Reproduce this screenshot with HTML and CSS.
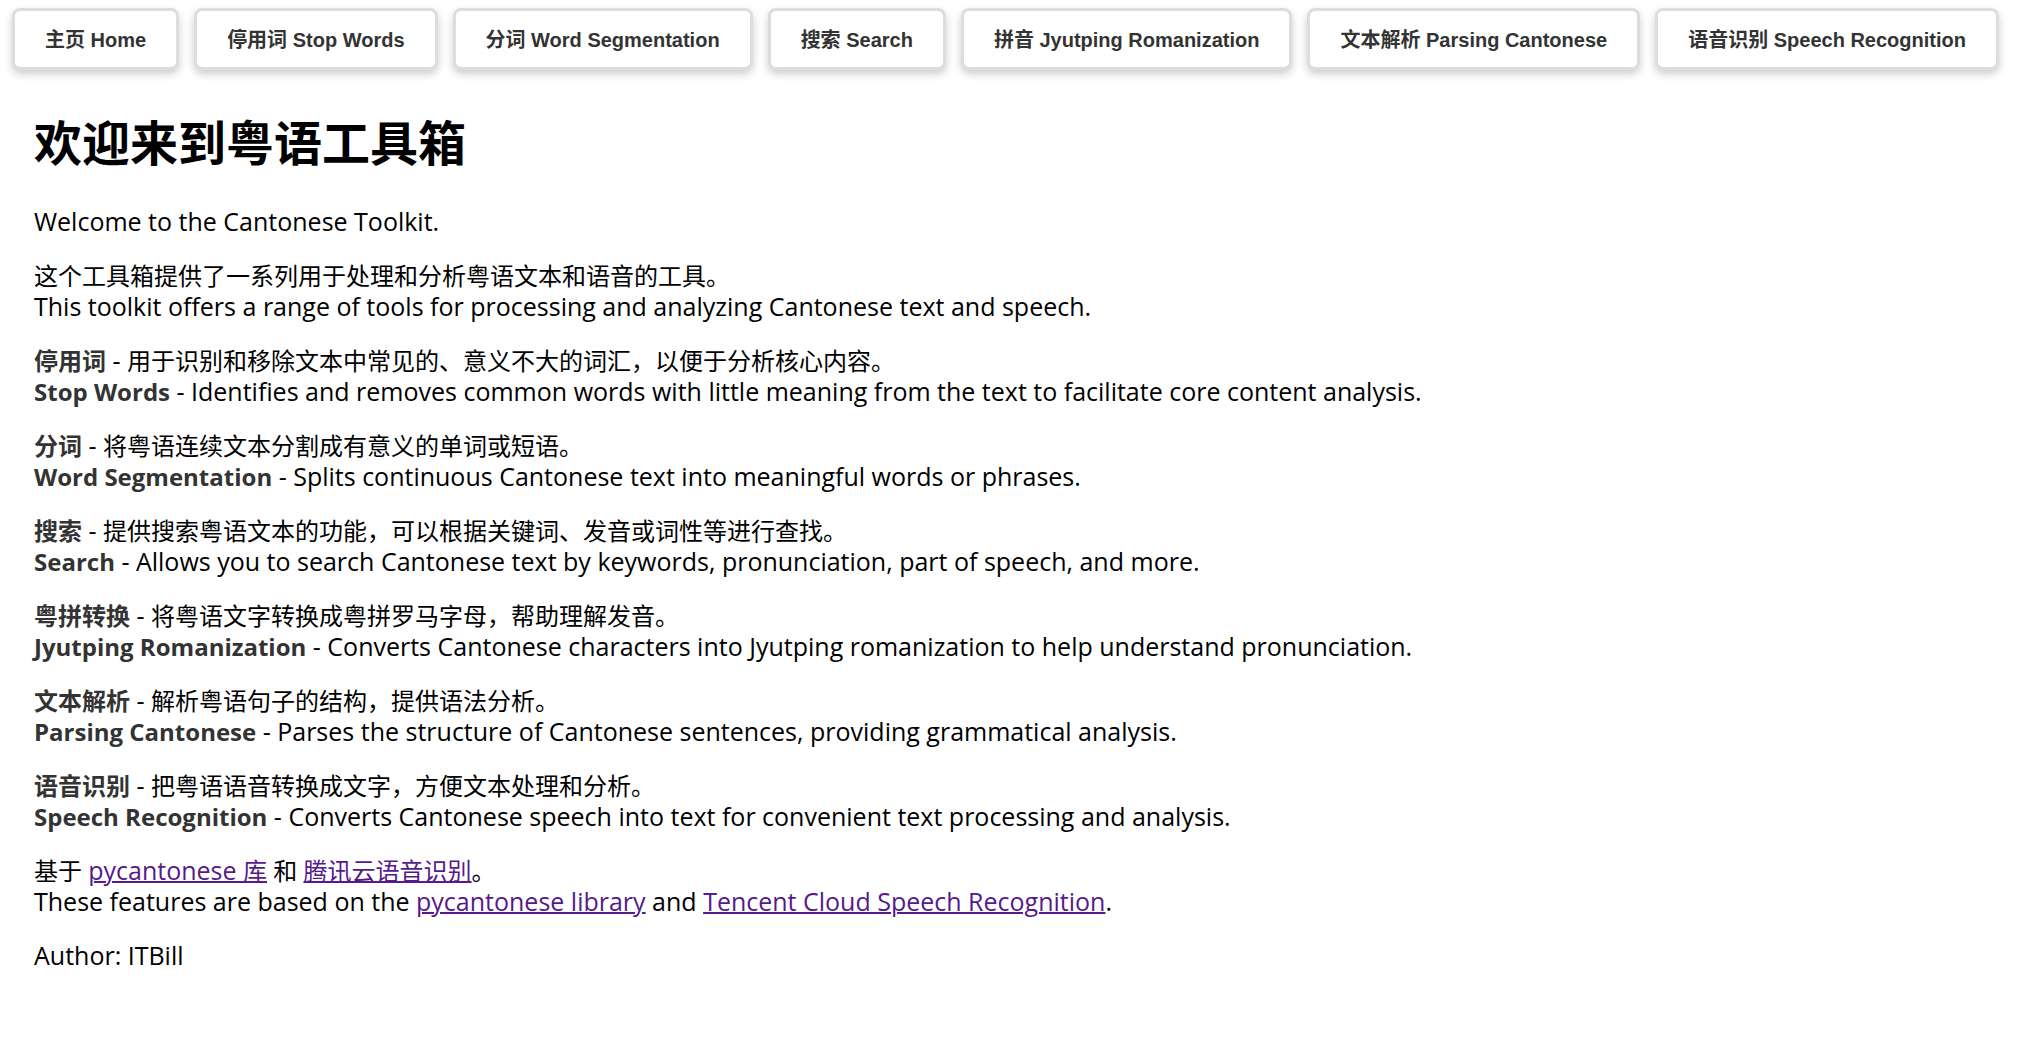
FILE: index.html
```html
<!DOCTYPE html>
<html lang="zh-CN">
<head>
<meta charset="UTF-8">
<meta name="viewport" content="width=device-width, initial-scale=1">
<title>粤语工具箱 Cantonese Toolkit</title>
<link rel="stylesheet" href="styles.css">
</head>
<body>
<nav class="nav">
  <button type="button" class="nav-button">主页 Home</button>
  <button type="button" class="nav-button">停用词 Stop Words</button>
  <button type="button" class="nav-button">分词 Word Segmentation</button>
  <button type="button" class="nav-button">搜索 Search</button>
  <button type="button" class="nav-button">拼音 Jyutping Romanization</button>
  <button type="button" class="nav-button">文本解析 Parsing Cantonese</button>
  <button type="button" class="nav-button">语音识别 Speech Recognition</button>
</nav>
<main class="content">
  <h1>欢迎来到粤语工具箱</h1>
  <p><span class="en" lang="en">Welcome to the Cantonese Toolkit.</span></p>
  <p>这个工具箱提供了一系列用于处理和分析粤语文本和语音的工具。<br>
  <span class="en" lang="en">This toolkit offers a range of tools for processing and analyzing Cantonese text and speech.</span></p>
  <p><strong>停用词</strong><span class="en"> - </span>用于识别和移除文本中常见的、意义不大的词汇，以便于分析核心内容。<br>
  <span class="en" lang="en"><strong>Stop Words</strong> - Identifies and removes common words with little meaning from the text to facilitate core content analysis.</span></p>
  <p><strong>分词</strong><span class="en"> - </span>将粤语连续文本分割成有意义的单词或短语。<br>
  <span class="en" lang="en"><strong>Word Segmentation</strong> - Splits continuous Cantonese text into meaningful words or phrases.</span></p>
  <p><strong>搜索</strong><span class="en"> - </span>提供搜索粤语文本的功能，可以根据关键词、发音或词性等进行查找。<br>
  <span class="en" lang="en"><strong>Search</strong> - Allows you to search Cantonese text by keywords, pronunciation, part of speech, and more.</span></p>
  <p><strong>粤拼转换</strong><span class="en"> - </span>将粤语文字转换成粤拼罗马字母，帮助理解发音。<br>
  <span class="en" lang="en"><strong>Jyutping Romanization</strong> - Converts Cantonese characters into Jyutping romanization to help understand pronunciation.</span></p>
  <p><strong>文本解析</strong><span class="en"> - </span>解析粤语句子的结构，提供语法分析。<br>
  <span class="en" lang="en"><strong>Parsing Cantonese</strong> - Parses the structure of Cantonese sentences, providing grammatical analysis.</span></p>
  <p><strong>语音识别</strong><span class="en"> - </span>把粤语语音转换成文字，方便文本处理和分析。<br>
  <span class="en" lang="en"><strong>Speech Recognition</strong> - Converts Cantonese speech into text for convenient text processing and analysis.</span></p>
  <p>基于 <a href="#pycantonese"><span class="en" lang="en">pycantonese </span>库</a> 和 <a href="#tencent">腾讯云语音识别</a>。<br>
  <span class="en" lang="en">These features are based on the <a href="#pycantonese">pycantonese library</a> and <a href="#tencent">Tencent Cloud Speech Recognition</a>.</span></p>
  <p><span class="en" lang="en">Author: ITBill</span></p>
</main>
</body>
</html>
```

FILE: styles.css
```css
body {
  margin: 0;
  background: #fff;
  color: #000;
  font-family: "Open Sans", "Noto Sans CJK SC", sans-serif;
  font-size: 24px;
  line-height: 31px;
}

.nav {
  display: flex;
  flex-wrap: wrap;
  gap: 15px;
  padding: 8px 12px;
}

.nav-button {
  padding: 17px 30px 15px;
  border: 3px solid #ddd;
  border-radius: 8px;
  background: #fff;
  box-shadow: 0 4px 8px rgba(0, 0, 0, 0.2);
  color: #333;
  font-family: "Liberation Sans", "Noto Sans CJK SC", sans-serif;
  font-size: 20px;
  font-weight: bold;
  line-height: 24px;
  cursor: pointer;
}

.content {
  padding: 33px 34px;
}

h1 {
  margin: 0 0 31px;
  font-size: 48px;
  line-height: 64px;
}

p {
  margin: 0 0 23px;
}

.en {
  font-size: 25px;
}

strong {
  color: #333;
  font-size: 24px;
}

a {
  color: #551a8b;
  text-decoration-thickness: 2px;
}
```
